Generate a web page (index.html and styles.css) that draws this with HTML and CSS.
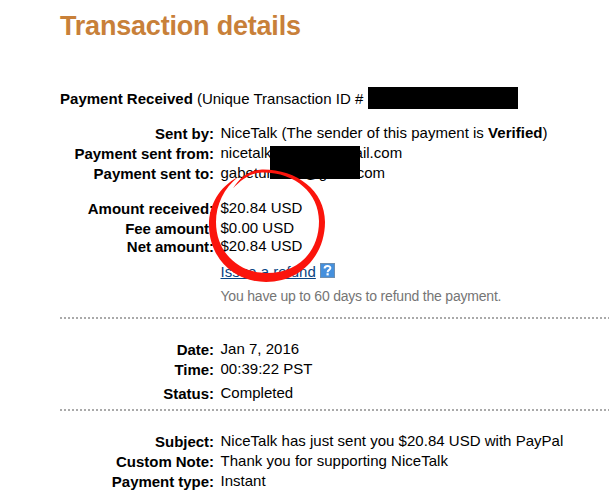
FILE: index.html
```
<!DOCTYPE html>
<html>
  <head>
    <meta charset="utf-8">
    <title>Transaction details</title>
    <link rel="stylesheet" href="styles.css">
  </head>
  <body>
    <h1>Transaction details</h1>
    <p class="transaction-id"><b>Payment Received</b> (Unique Transaction ID # <span class="redacted"></span></p>

    <div class="section sender">
      <div class="row"><b class="label">Sent by:</b><span>NiceTalk (The sender of this payment is <b>Verified</b>)</span></div>
      <div class="row"><b class="label">Payment sent from:</b><span class="email">nicetalk<i class="gap-from"></i>ail.com</span></div>
      <div class="row"><b class="label">Payment sent to:</b><span class="email">gabetur<i class="gap-to">@g</i>.com</span></div>
      <div class="redacted-block"></div>
    </div>

    <div class="section amounts">
      <div class="row"><b class="label">Amount received:</b><span>$20.84 USD</span></div>
      <div class="row fee"><b class="label">Fee amount:</b><span>$0.00 USD</span></div>
      <div class="row"><b class="label">Net amount:</b><span>$20.84 USD</span></div>
      <div class="refund">
        <a href="#">Issue a refund</a>
        <svg class="help" width="15" height="15" viewBox="0 0 15 15">
          <rect width="15" height="15" fill="#6f8fb0"/>
          <rect x="1" y="1" width="13" height="13" fill="#4590dd"/>
          <path d="M4.6 5.4C4.6 2.2 10.4 2.2 10.4 5.1C10.4 7 7.6 6.8 7.6 9.2" fill="none" stroke="#fff" stroke-width="2"/>
          <rect x="6.5" y="10.2" width="2.2" height="2.2" fill="#fff"/>
        </svg>
      </div>
      <p class="note">You have up to 60 days to refund the payment.</p>
    </div>

    <div class="section dates">
      <div class="row"><b class="label">Date:</b><span>Jan 7, 2016</span></div>
      <div class="row"><b class="label">Time:</b><span>00:39:22 PST</span></div>
      <div class="row status"><b class="label">Status:</b><span>Completed</span></div>
    </div>

    <div class="section info">
      <div class="row"><b class="label">Subject:</b><span>NiceTalk has just sent you $20.84 USD with PayPal</span></div>
      <div class="row"><b class="label">Custom Note:</b><span>Thank you for supporting NiceTalk</span></div>
      <div class="row"><b class="label">Payment type:</b><span>Instant</span></div>
    </div>

    <!-- red marker around the amounts -->
    <svg class="marker" width="120" height="116" viewBox="207 168 120 116">
      <path fill="#fb140c" d="M238 177C219 187 209 205 209 225C209 258 234 282 266 282C300 282 325 256 325 222C325 190 296 169 262 169.5C250 170 240 177 233 188.5C241 180 250 173 262 172.5C295 172 319 193 319 221C319 252 298 273 267 273C238 273 216 252 216 222C216 205 224 188 238 177Z"/>
    </svg>
  </body>
</html>
```
FILE: styles.css
```
html {
  overflow: hidden;
}

body {
  position: relative;
  margin: 0;
  padding: 9px 0 0 60px;
  height: 495px;
  box-sizing: border-box;
  overflow: hidden;
  background: #fff;
  color: #000;
  font-family: "Liberation Sans", Arial, Helvetica, sans-serif;
  font-size: 15px;
  line-height: 20px;
  letter-spacing: .02px;
  white-space: nowrap;
}

h1 {
  margin: 0;
  font-size: 27px;
  line-height: 34px;
  letter-spacing: -.2px;
  color: #c88039;
}

p {
  margin: 0;
}

.transaction-id {
  display: flex;
  gap: 4px;
  margin-top: 46px;
}

.redacted {
  width: 150px;
  height: 22px;
  margin: -2px 0 0 1px;
  background: #000;
}

.section {
  position: relative;
}

.row {
  display: flex;
  height: 20px;
}

.label {
  width: 154px;
  margin-right: 6.5px;
  padding-top: 1px;
  text-align: right;
  letter-spacing: -.03px;
}

.sender {
  margin-top: 14px;
}

.email {
  display: flex;
}

.gap-from {
  width: 83px;
}

.gap-to {
  width: 81px;
  text-indent: 32px;
  font-style: normal;
}

.redacted-block {
  position: absolute;
  left: 210px;
  top: 23px;
  width: 90px;
  height: 33px;
  background: #000;
}

.amounts {
  margin-top: 15px;
  height: 119px;
}

.fee {
  height: 18px;
}

.refund {
  display: flex;
  gap: 4.5px;
  margin: 6px 0 0 160.5px;
}

.refund a {
  color: #084482;
}

.help {
  margin-top: 1px;
}

.note {
  margin: 4px 0 0 160.5px;
  font-size: 14px;
  letter-spacing: -.2px;
  color: #757575;
}

.dates,
.info {
  padding-top: 22px;
}

/* dotted divider */
.dates::before,
.info::before {
  content: "";
  display: block;
  height: 2px;
  margin-top: -22px;
  margin-bottom: 20px;
  background: repeating-linear-gradient(90deg, #aaa 0 2px, #fff 2px 4px);
}

.dates {
  height: 70px;
}

.status {
  margin-top: 4px;
}

.marker {
  position: absolute;
  left: 207px;
  top: 168px;
}
```
